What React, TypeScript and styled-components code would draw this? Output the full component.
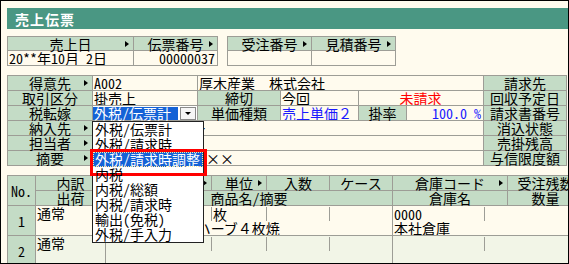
import React from "react";
import styled, { createGlobalStyle, css } from "styled-components";

const C = {
  line: "#9d9d96",
  head: "#c4dcc6",
  cream: "#fffbee",
  teal: "#4a9783",
  rowAlt: "#f2f5e7",
  blue: "#1462d6",
};

const GlobalStyle = createGlobalStyle`
  * { box-sizing: border-box; }
  html, body { margin: 0; padding: 0; }
  body {
    background: ${C.cream};
    font-family: "Noto Sans CJK JP", "Noto Sans", sans-serif;
    font-size: 14px;
    color: #000;
  }
`;

// 見出しセル右端の小さな三角
const arrow = css`
  &::after {
    content: "";
    position: absolute;
    right: 4px;
    top: 50%;
    margin-top: -3px;
    border-left: 4px solid #000;
    border-top: 3px solid transparent;
    border-bottom: 3px solid transparent;
  }
`;

const Window = styled.div`
  width: 569px;
  height: 264px;
  border: 1px solid #000;
  background: ${C.cream};
  padding: 7px 0 0 6px;
  overflow: hidden;
  line-height: 14px;
  font-feature-settings: "hwid";
`;

const Title = styled.div`
  height: 21px;
  background: ${C.teal};
  color: #fff;
  font-weight: bold;
  font-size: 14px;
  letter-spacing: 1px;
  padding-left: 8px;
  display: flex;
  align-items: center;
`;

const TopRow = styled.div`
  display: flex;
  gap: 9px;
  margin-top: 7px;
`;

const LineGrid = styled.div<{ $cols: string; $rows: string }>`
  display: grid;
  grid-template-columns: ${(p) => p.$cols};
  grid-template-rows: ${(p) => p.$rows};
  gap: 1px;
  padding: 1px;
  background: ${C.line};
  width: max-content;
`;

const Customer = styled(LineGrid)`
  margin-top: 9px;
`;

const Head = styled.div<{ $arrow?: boolean }>`
  position: relative;
  background: ${C.head};
  display: flex;
  align-items: center;
  justify-content: center;
  white-space: nowrap;
  ${(p) => p.$arrow && arrow}
`;

const Value = styled.div<{
  $span?: number;
  $color?: string;
  $align?: "left" | "center" | "right";
  $fw?: boolean;
}>`
  background: ${C.cream};
  grid-column: span ${(p) => p.$span ?? 1};
  color: ${(p) => p.$color ?? "#000"};
  text-align: ${(p) => p.$align ?? "left"};
  padding: 0 2px 0 1px;
  white-space: nowrap;
  overflow: hidden;
  ${(p) => p.$fw && "font-feature-settings: normal;"}
`;

const SelectCell = styled.div`
  position: relative;
  z-index: 2;
  background: #fff;
  display: flex;
  gap: 2px;
  padding: 1px 1px 0 0;
`;

const Selected = styled.div`
  width: 85px;
  background: ${C.blue};
  color: #fff;
  line-height: 13px;
  padding-left: 1px;
  white-space: nowrap;
`;

const DropButton = styled.div`
  width: 16px;
  border: 1px solid #8a8a8a;
  background: #f6f6f6;
  display: flex;
  align-items: center;
  justify-content: center;

  &::after {
    content: "";
    border-top: 3px solid #000;
    border-left: 3px solid transparent;
    border-right: 3px solid transparent;
  }
`;

const DropList = styled.ul`
  position: absolute;
  left: -1px;
  top: 15px;
  width: 112px;
  margin: 0;
  padding: 0;
  list-style: none;
  background: #fff;
  border: 1px solid #222;
`;

const DropItem = styled.li<{ $active?: boolean }>`
  position: relative;
  height: 15px;
  line-height: 15px;
  padding-left: 2px;
  white-space: nowrap;
  ${(p) =>
    p.$active &&
    css`
      background: ${C.blue};
      color: #fff;
      outline: 1px dotted #ffe9a0;
      outline-offset: -1px;

      &::after {
        content: "";
        position: absolute;
        left: -3px;
        top: -3px;
        width: 111px;
        height: 21px;
        border: 3px solid #f00;
      }
    `}
`;

const TABLE_COLS = "28px 70px 106px 55px 63px 63px 115px 76px";

const Table = styled.div`
  margin-top: 9px;
  width: max-content;
  border-left: 1px solid ${C.line};
  border-top: 1px solid ${C.line};
`;

const TableHead = styled.div`
  display: grid;
  grid-template-columns: ${TABLE_COLS};
  grid-template-rows: 15px 15px;
`;

const TH = styled.div<{ $arrow?: boolean; $rows?: number; $span?: number; $fw?: boolean }>`
  position: relative;
  grid-row: span ${(p) => p.$rows ?? 1};
  grid-column: span ${(p) => p.$span ?? 1};
  background: ${C.head};
  border-right: 1px solid ${C.line};
  border-bottom: 1px solid ${C.line};
  display: flex;
  align-items: center;
  justify-content: center;
  white-space: nowrap;
  ${(p) => p.$fw && "font-feature-settings: normal;"}
  ${(p) => p.$arrow && arrow}
`;

const BodyRow = styled.div<{ $alt?: boolean }>`
  display: grid;
  grid-template-columns: ${TABLE_COLS};
  grid-template-rows: 15px 14px;
  border-bottom: 1px solid ${C.line};
  background: ${(p) => (p.$alt ? C.rowAlt : C.cream)};
`;

const NoCell = styled.div`
  grid-row: 1 / 3;
  grid-column: 1;
  background: ${C.head};
  border-right: 1px solid ${C.line};
  display: flex;
  align-items: center;
  justify-content: center;
`;

const KindCell = styled.div`
  grid-row: 1 / 3;
  grid-column: 2;
  border-right: 1px solid ${C.line};
  padding-left: 1px;
`;

const Field = styled.div<{ $col: string; $row?: number; $w?: number; $full?: boolean }>`
  grid-column: ${(p) => p.$col};
  grid-row: ${(p) => p.$row ?? 1};
  width: ${(p) => (p.$w ? `${p.$w}px` : "auto")};
  margin-top: ${(p) => (p.$full ? 0 : 1)}px;
  height: ${(p) => (p.$full ? 15 : 14)}px;
  border-right: 1px solid ${C.line};
  padding-left: 1px;
  white-space: nowrap;
`;

const Text = styled.div<{ $col: string; $row?: number; $indent?: number; $line?: boolean; $fw?: boolean }>`
  grid-column: ${(p) => p.$col};
  grid-row: ${(p) => p.$row ?? 1};
  padding-left: ${(p) => p.$indent ?? 1}px;
  white-space: nowrap;
  overflow: hidden;
  ${(p) => p.$line && `border-right: 1px solid ${C.line};`}
  ${(p) => p.$fw && "font-feature-settings: normal;"}
`;

const taxOptions = [
  "外税/伝票計",
  "外税/請求時",
  "外税/請求時調整",
  "内税",
  "内税/総額",
  "内税/請求時",
  "輸出(免税)",
  "外税/手入力",
];

type Line = { no: number; kind: string; unit?: string; name?: string; whCode?: string; whName?: string };

const lines: Line[] = [
  { no: 1, kind: "通常", unit: "枚", name: "特選食パン　ハーブ４枚焼", whCode: "0000", whName: "本社倉庫" },
  { no: 2, kind: "通常" },
];

export default function App() {
  return (
    <>
      <GlobalStyle />
      <Window>
        <Title>売上伝票</Title>

        <TopRow>
          <LineGrid $cols="125px 83px" $rows="13px 14px">
            <Head $arrow>売上日</Head>
            <Head $arrow>伝票番号</Head>
            <Value>20**年10月 2日</Value>
            <Value $align="right">00000037</Value>
          </LineGrid>
          <LineGrid $cols="83px 83px" $rows="13px 14px">
            <Head $arrow>受注番号</Head>
            <Head $arrow>見積番号</Head>
            <Value />
            <Value />
          </LineGrid>
        </TopRow>

        <Customer $cols="84px 104px 82px 77px 47px 76px 82px" $rows="repeat(6, 14px)">
          <Head $arrow>得意先</Head>
          <Value>A002</Value>
          <Value $span={4} $fw>厚木産業　株式会社</Value>
          <Head>請求先</Head>

          <Head>取引区分</Head>
          <Value>掛売上</Value>
          <Head>締切</Head>
          <Value>今回</Value>
          <Value $span={2} $align="center" $color="#ff0000">未請求</Value>
          <Head>回収予定日</Head>

          <Head>税転嫁</Head>
          <SelectCell>
            <Selected>{taxOptions[0]}</Selected>
            <DropButton />
            <DropList>
              {taxOptions.map((o, i) => (
                <DropItem key={o} $active={i === 2}>{o}</DropItem>
              ))}
            </DropList>
          </SelectCell>
          <Head>単価種類</Head>
          <Value $color="#1a1aff" $fw>売上単価２</Value>
          <Head>掛率</Head>
          <Value $align="right" $color="#1a1aff">100.0 %</Value>
          <Head>請求書番号</Head>

          <Head $arrow>納入先</Head>
          <Value $span={5} $fw>厚木本社センター</Value>
          <Head>消込状態</Head>

          <Head $arrow>担当者</Head>
          <Value $span={5} />
          <Head>売掛残高</Head>

          <Head $arrow>摘要</Head>
          <Value $span={5} $fw>××××××××××</Value>
          <Head>与信限度額</Head>
        </Customer>

        <Table>
          <TableHead>
            <TH $rows={2}>No.</TH>
            <TH>内訳</TH>
            <TH $arrow $fw>商品コード</TH>
            <TH $arrow>単位</TH>
            <TH>入数</TH>
            <TH $fw>ケース</TH>
            <TH $arrow $fw>倉庫コード</TH>
            <TH>受注残数</TH>
            <TH>出荷</TH>
            <TH $span={4}>商品名/摘要</TH>
            <TH>倉庫名</TH>
            <TH>数量</TH>
          </TableHead>

          {lines.map((l, i) => (
            <BodyRow key={l.no} $alt={i % 2 === 1}>
              <NoCell>{l.no}</NoCell>
              <KindCell>{l.kind}</KindCell>
              <Field $col="3" />
              <Field $col="4">{l.unit}</Field>
              <Field $col="5" />
              <Field $col="6" $full />
              <Field $col="7" $w={92}>{l.whCode}</Field>
              <Text $col="3 / 7" $row={2} $indent={6} $line $fw>{l.name}</Text>
              <Text $col="7" $row={2}>{l.whName}</Text>
            </BodyRow>
          ))}
        </Table>
      </Window>
    </>
  );
}
